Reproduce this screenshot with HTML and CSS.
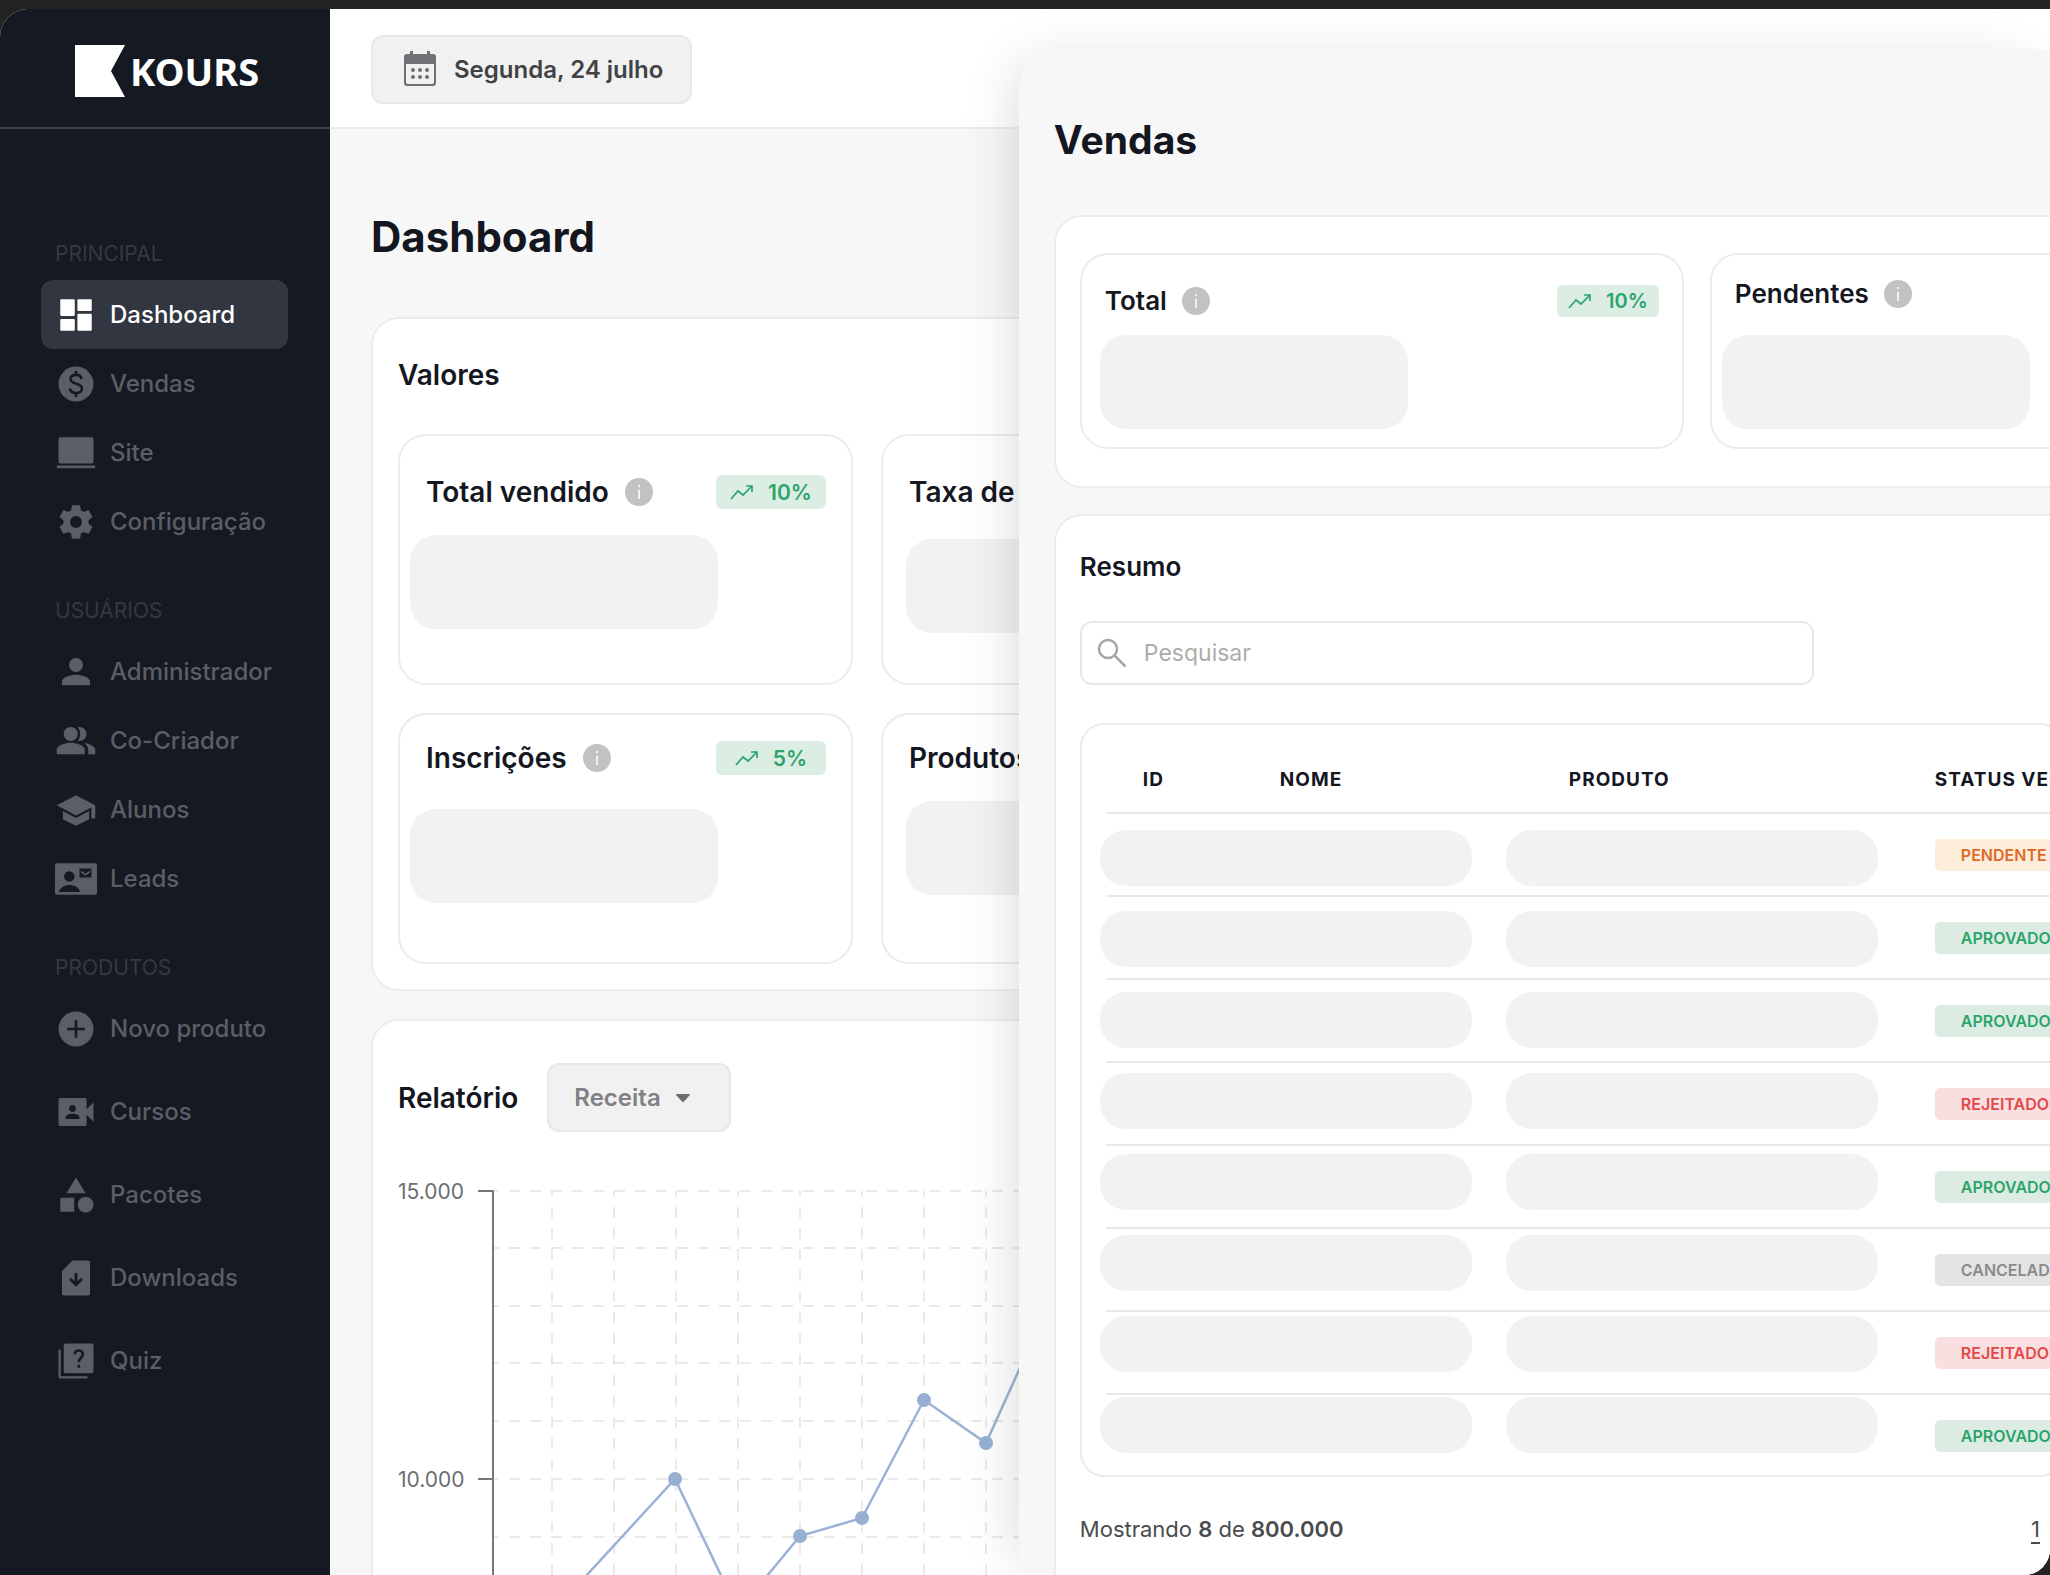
FILE: index.html
```html
<!DOCTYPE html>
<html lang="pt-BR">
<head>
    <meta charset="UTF-8">
    <meta name="viewport" content="width=device-width, initial-scale=1.0">
    <title>Kours - Dashboard</title>
    <link rel="stylesheet" href="styles.css">
</head>
<body>
    <!-- shared icons -->
    <svg class="sprite" aria-hidden="true">
        <symbol id="info" viewBox="0 0 24 24">
            <circle cx="12" cy="12" r="12" fill="#c2c2c2"/>
            <path d="M11.2 10h1.6v8h-1.6zM11.2 6h1.6v2h-1.6z" fill="#f4f4f4"/>
        </symbol>
        <symbol id="trend" viewBox="0 0 24 16">
            <path d="M1 15l7-8 5 4 9-9M16 2h6v6" fill="none" stroke="currentColor" stroke-width="1.7"/>
        </symbol>
    </svg>

    <div class="app">
        <aside class="sidebar">
            <a href="#" class="logo">
                <svg width="50" height="52" viewBox="0 0 50 52" aria-hidden="true"><path d="M0 0h50L36 26l14 26H0z" fill="#fff"/></svg>
                <span>KOURS</span>
            </a>
            <nav class="menu">
                <div class="menu-group">
                    <h2>PRINCIPAL</h2>
                    <a href="#" class="menu-item active">
                        <svg viewBox="0 0 24 24"><rect x="3" y="3" width="8.3" height="9.5" rx=".6"/><rect x="3" y="14.3" width="8.3" height="6.7" rx=".6"/><rect x="12.8" y="3" width="8.2" height="6.7" rx=".6"/><rect x="12.8" y="11.3" width="8.2" height="9.7" rx=".6"/></svg>
                        Dashboard
                    </a>
                    <a href="#" class="menu-item">
                        <svg viewBox="0 0 24 24"><circle cx="12" cy="12" r="10"/><path class="cut" d="M15.2 9.2c-.3-1.6-1.5-2.4-3.2-2.4-1.8 0-3.1.9-3.1 2.4 0 3.5 6.5 1.9 6.5 5.4 0 1.6-1.4 2.6-3.4 2.6-1.9 0-3.2-.9-3.5-2.6M12 4.6v2.3M12 17.1v2.3"/></svg>
                        Vendas
                    </a>
                    <a href="#" class="menu-item">
                        <svg viewBox="0 0 24 24"><rect x="2" y="3" width="20" height="15" rx="1"/><rect x="1" y="19.2" width="22" height="1.5" rx=".5"/></svg>
                        Site
                    </a>
                    <a href="#" class="menu-item">
                        <svg viewBox="0 0 24 24"><path d="M19.14 12.94c.04-.3.06-.61.06-.94 0-.32-.02-.64-.07-.94l2.03-1.58c.18-.14.23-.41.12-.61l-1.92-3.32c-.12-.22-.37-.29-.59-.22l-2.39.96c-.5-.38-1.03-.7-1.62-.94L14.4 2.81c-.04-.24-.24-.41-.48-.41h-3.84c-.24 0-.43.17-.47.41L9.25 5.35c-.59.24-1.13.57-1.62.94l-2.39-.96c-.22-.08-.47 0-.59.22L2.74 8.87c-.12.21-.08.47.12.61l2.03 1.58c-.05.3-.09.63-.09.94s.02.64.07.94l-2.03 1.58c-.18.14-.23.41-.12.61l1.92 3.32c.12.22.37.29.59.22l2.39-.96c.5.38 1.03.7 1.62.94l.36 2.54c.05.24.24.41.48.41h3.84c.24 0 .44-.17.47-.41l.36-2.54c.59-.24 1.13-.56 1.62-.94l2.39.96c.22.08.47 0 .59-.22l1.92-3.32c.12-.22.07-.47-.12-.61l-2.01-1.58zM12 15.4a3.4 3.4 0 1 1 0-6.8 3.4 3.4 0 0 1 0 6.8z"/></svg>
                        Configuração
                    </a>
                </div>
                <div class="menu-group">
                    <h2>USUÁRIOS</h2>
                    <a href="#" class="menu-item">
                        <svg viewBox="0 0 24 24"><circle cx="12" cy="8" r="4"/><path d="M12 13.5c-2.67 0-8 1.2-8 3.9v2.1h16v-2.1c0-2.7-5.33-3.9-8-3.9z"/></svg>
                        Administrador
                    </a>
                    <a href="#" class="menu-item">
                        <svg viewBox="0 0 24 24"><path d="M16.67 13.13C18.04 14.06 19 15.32 19 17v2.5h4V17c0-2.18-3.57-3.47-6.33-3.87zM14 12c2.21 0 4-1.79 4-4s-1.79-4-4-4c-.3 0-.6.04-.9.14.8 1.1 1.3 2.4 1.3 3.86s-.5 2.76-1.3 3.86c.3.1.6.14.9.14zM9 12c2.21 0 4-1.79 4-4s-1.79-4-4-4-4 1.79-4 4 1.79 4 4 4zm0 1c-2.67 0-8 1.34-8 4v2.5h16V17c0-2.66-5.33-4-8-4z"/></svg>
                        Co-Criador
                    </a>
                    <a href="#" class="menu-item">
                        <svg viewBox="0 0 24 24"><path d="M4.5 12.6v4.7L12 21l7.5-3.7v-4.7L12 16.5zM12 3.5L1 9.3l11 5.8 8.8-4.6v6.3H23V9.3z"/></svg>
                        Alunos
                    </a>
                    <a href="#" class="menu-item">
                        <svg viewBox="0 0 24 24"><path fill-rule="evenodd" d="M1 3h22a1 1 0 0 1 1 1v16a1 1 0 0 1-1 1H1a1 1 0 0 1-1-1V4a1 1 0 0 1 1-1zm7.2 4.5a3 3 0 1 0 0 6 3 3 0 0 0 0-6zm-6 11.9h12.2c-.7-2.6-3.3-4-6.1-4s-5.4 1.4-6.1 4zM14 6v5.2h6.8V6z"/><path d="M14.8 7.2l2.6 1.8 2.6-1.8v1.1l-2.6 1.8-2.6-1.8z"/></svg>
                        Leads
                    </a>
                </div>
                <div class="menu-group loose">
                    <h2>PRODUTOS</h2>
                    <a href="#" class="menu-item">
                        <svg viewBox="0 0 24 24"><circle cx="12" cy="12" r="10"/><path class="cut" d="M12 7v10M7 12h10"/></svg>
                        Novo produto
                    </a>
                    <a href="#" class="menu-item">
                        <svg viewBox="0 0 24 24"><path d="M18 10.48V5c0-.6-.4-1-1-1H3c-.6 0-1 .4-1 1v14c0 .6.4 1 1 1h14c.6 0 1-.4 1-1v-5.48l4 3.98v-11l-4 3.98zM10 8c1.1 0 2 .9 2 2s-.9 2-2 2-2-.9-2-2 .9-2 2-2zm4 8H6v-.57c0-.81.48-1.53 1.22-1.85.85-.37 1.79-.58 2.78-.58.99 0 1.93.21 2.78.58.74.32 1.22 1.04 1.22 1.85V16z"/></svg>
                        Cursos
                    </a>
                    <a href="#" class="menu-item">
                        <svg viewBox="0 0 24 24"><path d="M12 2l-5.5 9h11zM3 13.5h8v8H3z"/><circle cx="17.5" cy="17.5" r="4.5"/></svg>
                        Pacotes
                    </a>
                    <a href="#" class="menu-item">
                        <svg viewBox="0 0 24 24"><path d="M19 2h-9L4 8v13c0 .6.4 1 1 1h14c.6 0 1-.4 1-1V3c0-.6-.4-1-1-1zm-7 15l-4-4 1.2-1.2 2 2V9.2h1.6v4.6l2-2L16 13l-4 4z"/></svg>
                        Downloads
                    </a>
                    <a href="#" class="menu-item">
                        <svg viewBox="0 0 24 24"><path d="M3.3 5.5H2V21c0 .6.4 1 1 1h15.5v-1.3H3.3z"/><rect x="5" y="2" width="17" height="17" rx="1"/><path class="cut" d="M11.3 8.2c0-1.3 1-2.2 2.3-2.2s2.3.9 2.3 2.2c0 1.8-2.3 2.1-2.3 4.3M13.6 14.2v1.6"/></svg>
                        Quiz
                    </a>
                </div>
            </nav>
        </aside>

        <main class="main">
            <header class="topbar">
                <button type="button" class="date-btn">
                    <svg width="32" height="36" viewBox="0 0 32 36" aria-hidden="true">
                        <path fill="#707174" d="M6 0h3v3h14V0h3v3h3a3 3 0 0 1 3 3v26a3 3 0 0 1-3 3H3a3 3 0 0 1-3-3V6a3 3 0 0 1 3-3h3zM2 13v18a2 2 0 0 0 2 2h24a2 2 0 0 0 2-2V13z"/>
                        <g fill="#707174"><circle cx="9" cy="19" r="2"/><circle cx="16" cy="19" r="2"/><circle cx="23" cy="19" r="2"/><circle cx="9" cy="26" r="2"/><circle cx="16" cy="26" r="2"/><circle cx="23" cy="26" r="2"/></g>
                    </svg>
                    Segunda, 24 julho
                </button>
            </header>

            <div class="content">
                <h1>Dashboard</h1>

                <section class="card values">
                    <h3>Valores</h3>
                    <div class="stats">
                        <div class="stat tall">
                            <div class="stat-head">
                                <h4>Total vendido</h4>
                                <svg class="info"><use href="#info"/></svg>
                                <span class="trend"><svg><use href="#trend"/></svg>10%</span>
                            </div>
                            <div class="blank"></div>
                        </div>
                        <div class="stat tall">
                            <div class="stat-head"><h4>Taxa de</h4></div>
                            <div class="blank shifted"></div>
                        </div>
                        <div class="stat">
                            <div class="stat-head">
                                <h4>Inscrições</h4>
                                <svg class="info"><use href="#info"/></svg>
                                <span class="trend"><svg><use href="#trend"/></svg>5%</span>
                            </div>
                            <div class="blank"></div>
                        </div>
                        <div class="stat">
                            <div class="stat-head"><h4>Produtos</h4></div>
                            <div class="blank shifted"></div>
                        </div>
                    </div>
                </section>

                <section class="card report">
                    <div class="report-head">
                        <h3>Relatório</h3>
                        <div class="select">
                            <select aria-label="Tipo de relatório">
                                <option>Receita</option>
                            </select>
                            <svg width="16" height="10" viewBox="0 0 16 10" aria-hidden="true"><path d="M2 1h12q1.5 0 .6 1.2L9 8.6q-1 1-2 0L1.400 2.200Q.5 1 2 1z" fill="#6c6d70"/></svg>
                        </div>
                    </div>
                    <svg class="chart" role="img" aria-label="Receita">
                        <g class="grid">
                            <path d="M95 20H900M95 77H900M95 135H900M95 192H900M95 250H900M95 308H900M95 366H900"/>
                            <path d="M154 20V500M216 20V500M278 20V500M340 20V500M402 20V500M464 20V500M526 20V500M588 20V500M650 20V500"/>
                        </g>
                        <path class="axis" d="M80 20H95V500M80 308H95"/>
                        <text x="0" y="28">15.000</text>
                        <text x="0" y="316">10.000</text>
                        <polyline class="line" points="154,442 277,308 340,440 402,365 464,347 526,229 588,272 650,135"/>
                        <g class="dots"><circle cx="277" cy="308" r="7"/><circle cx="402" cy="365" r="7"/><circle cx="464" cy="347" r="7"/><circle cx="526" cy="229" r="7"/><circle cx="588" cy="272" r="7"/></g>
                    </svg>
                </section>
            </div>
        </main>

        <section class="panel">
            <h1>Vendas</h1>

            <div class="card totals">
                <div class="stat tall">
                    <div class="stat-head">
                        <h4>Total</h4>
                        <svg class="info"><use href="#info"/></svg>
                        <span class="trend"><svg><use href="#trend"/></svg>10%</span>
                    </div>
                    <div class="blank"></div>
                </div>
                <div class="stat">
                    <div class="stat-head">
                        <h4>Pendentes</h4>
                        <svg class="info"><use href="#info"/></svg>
                    </div>
                    <div class="blank"></div>
                </div>
            </div>

            <div class="card summary">
                <h3>Resumo</h3>
                <label class="search">
                    <svg width="30" height="30" viewBox="0 0 30 30" aria-hidden="true"><g fill="none" stroke="#a6a6a6" stroke-width="2.5"><circle cx="11" cy="11" r="9"/><path d="M17.5 17.5l11 11"/></g></svg>
                    <input type="search" placeholder="Pesquisar" aria-label="Pesquisar">
                </label>

                <div class="table-box">
                    <table>
                        <colgroup><col class="col-id"><col class="col-name"><col class="col-product"><col></colgroup>
                        <thead>
                            <tr><th>ID</th><th>NOME</th><th>PRODUTO</th><th>STATUS VENDA</th></tr>
                        </thead>
                        <tbody>
                            <tr><td></td><td></td><td></td><td><span class="status pending">PENDENTE</span></td></tr>
                            <tr><td></td><td></td><td></td><td><span class="status approved">APROVADO</span></td></tr>
                            <tr><td></td><td></td><td></td><td><span class="status approved">APROVADO</span></td></tr>
                            <tr><td></td><td></td><td></td><td><span class="status rejected">REJEITADO</span></td></tr>
                            <tr><td></td><td></td><td></td><td><span class="status approved">APROVADO</span></td></tr>
                            <tr><td></td><td></td><td></td><td><span class="status canceled">CANCELADO</span></td></tr>
                            <tr><td></td><td></td><td></td><td><span class="status rejected">REJEITADO</span></td></tr>
                            <tr><td></td><td></td><td></td><td><span class="status approved">APROVADO</span></td></tr>
                        </tbody>
                    </table>
                    <!-- loading blanks over the table cells -->
                    <div class="blanks">
                        <i></i><i></i><i></i><i></i><i></i><i></i><i></i><i></i>
                        <i></i><i></i><i></i><i></i><i></i><i></i><i></i><i></i>
                    </div>
                </div>

                <div class="table-foot">
                    <p>Mostrando <b>8</b> de <b>800.000</b></p>
                    <a href="#">1</a>
                </div>
            </div>
        </section>
    </div>
</body>
</html>
```

FILE: styles.css
```css
* {
    box-sizing: border-box;
}
body {
    margin: 0;
    padding-top: 9px;
    height: 100vh;
    overflow: hidden;
    background-color: #232323;
    color: #14171f;
    font-family: Inter, "Liberation Sans", sans-serif;
}
h1, h2, h3, h4, p {
    margin: 0;
}
a {
    text-decoration: none;
}
.sprite {
    display: none;
}
.app {
    position: relative;
    display: flex;
    height: 100%;
    overflow: hidden;
    border-radius: 28px 0 26px 0;
    background-color: #f7f7f7;
}

/* sidebar */
.sidebar {
    flex: none;
    width: 330px;
    background-color: #151922;
}
.logo {
    display: flex;
    align-items: center;
    gap: 5px;
    height: 120px;
    padding: 5px 0 0 75px;
    border-bottom: 2px solid #3f434b;
    color: #fff;
    font: bold 38px/52px "Noto Sans", "Open Sans", sans-serif;
}
.menu {
    display: flex;
    flex-direction: column;
    gap: 41px;
    padding: 111px 42px 0 41px;
}
.menu-group {
    display: flex;
    flex-direction: column;
}
.menu-group h2 {
    margin-bottom: 12px;
    padding-left: 14px;
    color: #343841;
    font-size: 21px;
    line-height: 28px;
    font-weight: 400;
}
.menu-group.loose {
    gap: 14px;
}
.menu-group.loose h2 {
    margin-bottom: -2px;
}
.menu-item {
    display: flex;
    align-items: center;
    gap: 13px;
    height: 69px;
    padding-left: 14px;
    border-radius: 12px;
    color: #5b5e67;
    font-size: 24px;
    font-weight: 500;
    white-space: nowrap;
}
.menu-item svg {
    flex: none;
    width: 42px;
    height: 42px;
    fill: currentColor;
}
.menu-item .cut {
    fill: none;
    stroke: #151922;
    stroke-width: 1.5;
}
.menu-item.active {
    background-color: #313640;
    color: #fff;
}

/* main column */
.main {
    flex: 1;
    min-width: 0;
}
.topbar {
    display: flex;
    align-items: center;
    height: 120px;
    padding: 2px 0 0 41px;
    border-bottom: 2px solid #ececec;
    background-color: #fff;
}
.date-btn {
    display: flex;
    align-items: center;
    gap: 18px;
    height: 69px;
    padding: 0 27px 0 31px;
    border: 2px solid #e8e8e8;
    border-radius: 12px;
    background-color: #f1f1f1;
    color: #414244;
    font: 600 24px Inter, sans-serif;
}
.content {
    padding: 82px 41px 0;
}
h1 {
    font-size: 42px;
    line-height: 52px;
    font-weight: 700;
}
h3 {
    font-size: 28px;
    line-height: 34px;
    font-weight: 600;
}
.card {
    border: 2px solid #ececec;
    border-radius: 28px;
    background-color: #fff;
}
.values {
    margin-top: 54px;
    padding: 39px 25px 25px;
}
.stats {
    display: grid;
    grid-template-columns: repeat(2, 455px);
    gap: 28px;
    margin-top: 42px;
}
.stat {
    height: 251px;
    padding: 26px 25px 0 26px;
    border: 2px solid #ececec;
    border-radius: 28px;
}
.stat.tall {
    padding-top: 39px;
}
.stat-head {
    display: flex;
    align-items: center;
    height: 34px;
}
.stat-head h4 {
    font-size: 28px;
    line-height: 34px;
    font-weight: 600;
    white-space: nowrap;
}
.info {
    width: 28px;
    height: 28px;
    margin-left: 16px;
}
.trend {
    display: flex;
    align-items: center;
    justify-content: center;
    gap: 14px;
    width: 110px;
    height: 34px;
    margin-left: auto;
    border-radius: 6px;
    background-color: #dcede4;
    color: #2ba56c;
    font-size: 21px;
    font-weight: 600;
}
.trend svg {
    width: 24px;
    height: 16px;
}
.blank {
    width: 308px;
    height: 94px;
    margin: 34px 0 0 -16px;
    border-radius: 26px;
    background-color: #f2f2f2;
}
.blank.shifted {
    margin: 26px 0 0 -3px;
}
.tall .blank {
    margin-top: 26px;
}
.tall .blank.shifted {
    margin-top: 30px;
}

/* report */
.report {
    height: 700px;
    margin-top: 28px;
    padding: 42px 25px 0;
}
.report-head {
    display: flex;
    align-items: center;
    gap: 29px;
}
.select {
    display: grid;
    align-items: center;
}
.select > * {
    grid-area: 1 / 1;
}
.select svg {
    justify-self: end;
    margin-right: 40px;
    pointer-events: none;
}
.select select {
    width: 184px;
    height: 69px;
    padding: 0 25px;
    border: 2px solid #e8e8e8;
    border-radius: 12px;
    background-color: #f1f1f1;
    color: #808184;
    font: 600 24px Inter, sans-serif;
    appearance: none;
}
.chart {
    display: block;
    width: 100%;
    height: 500px;
    margin-top: 39px;
}
.chart text {
    fill: #6d6e70;
    font-size: 21px;
}
.grid {
    fill: none;
    stroke: #e4e4e4;
    stroke-width: 1.5;
    stroke-dasharray: 11 10;
    stroke-dashoffset: 5;
}
.axis {
    fill: none;
    stroke: #77787a;
    stroke-width: 2;
}
.line {
    fill: none;
    stroke: #9ab2d6;
    stroke-width: 2.5;
}
.dots {
    fill: #97b0d2;
}

/* sales panel, lies over the dashboard */
.panel {
    position: absolute;
    top: 40px;
    right: 0;
    bottom: 0;
    width: 50.3%;
    padding: 66px 0 0 35px;
    overflow: hidden;
    background-color: #f7f7f7;
    border-radius: 40px 0 0 0;
    box-shadow: -16px 0 56px -16px rgba(0, 0, 0, 0.16);
}
.panel h1 {
    font-size: 39px;
    line-height: 50px;
}
.panel .card {
    margin-right: -40px;
}
.totals {
    display: flex;
    gap: 26px;
    margin-top: 50px;
    padding: 36px 24px 37px;
}
.totals .stat {
    flex: none;
    width: 604px;
    height: 196px;
    padding: 22px 23px 0 23px;
}
.totals .stat.tall {
    padding-top: 29px;
}
.panel h3, .panel h4 {
    font-size: 26px;
}
.panel .info {
    margin-left: 15px;
}
.panel .trend {
    width: 102px;
    height: 32px;
    font-size: 20px;
}
.totals .blank {
    margin: 24px 0 0 -13px;
}
.totals .tall .blank {
    margin: 17px 0 0 -5px;
}
.summary {
    height: 1100px;
    margin-top: 26px;
    padding: 34px 24px 0;
}
.search {
    display: flex;
    align-items: center;
    gap: 17px;
    width: 734px;
    height: 64px;
    margin-top: 37px;
    padding-left: 15px;
    border: 2px solid #e8e8e8;
    border-radius: 12px;
}
.search input {
    flex: 1;
    border: none;
    outline: none;
    padding: 0;
    background: none;
    font: 400 23px Inter, sans-serif;
}
.search input::placeholder {
    color: #adadad;
}

/* table */
.table-box {
    position: relative;
    height: 754px;
    margin-top: 38px;
    padding: 22px 0 0 24px;
    border: 2px solid #ececec;
    border-radius: 24px;
}
table {
    width: 100%;
    table-layout: fixed;
    border-collapse: collapse;
}
.col-id {
    width: 137px;
}
.col-name {
    width: 289px;
}
.col-product {
    width: 366px;
}
th, td {
    padding: 0 0 0 37px;
    border-bottom: 2px solid #e9e9e9;
    text-align: left;
    white-space: nowrap;
}
th {
    height: 66px;
    font-size: 19px;
    font-weight: 700;
    letter-spacing: 1px;
}
td {
    height: 83px;
}
tbody tr:last-child td {
    border-bottom: none;
}
.status {
    display: inline-block;
    padding: 0 26px;
    border-radius: 5px;
    font-size: 16px;
    line-height: 32px;
    font-weight: 600;
}
.pending {
    background-color: #fdeedb;
    color: #e0692a;
}
.approved {
    background-color: #dcece3;
    color: #2ba56c;
}
.rejected {
    background-color: #f9dfdf;
    color: #e24a4a;
}
.canceled {
    background-color: #e4e4e4;
    color: #8a8a8a;
}
.blanks {
    position: absolute;
    top: 105px;
    left: 18px;
    display: grid;
    grid-template-columns: 372px 372px;
    grid-auto-rows: 56px;
    gap: 25px 34px;
}
.blanks i {
    border-radius: 26px;
    background-color: #f2f2f2;
}
.table-foot {
    display: flex;
    align-items: center;
    justify-content: space-between;
    margin-top: 37px;
    padding-right: 24px;
    color: #4a4b4e;
    font-size: 22px;
    line-height: 30px;
}
.table-foot b {
    font-weight: 600;
}
.table-foot a {
    color: #4a4b4e;
    text-decoration: underline;
    text-underline-offset: 5px;
}
```
